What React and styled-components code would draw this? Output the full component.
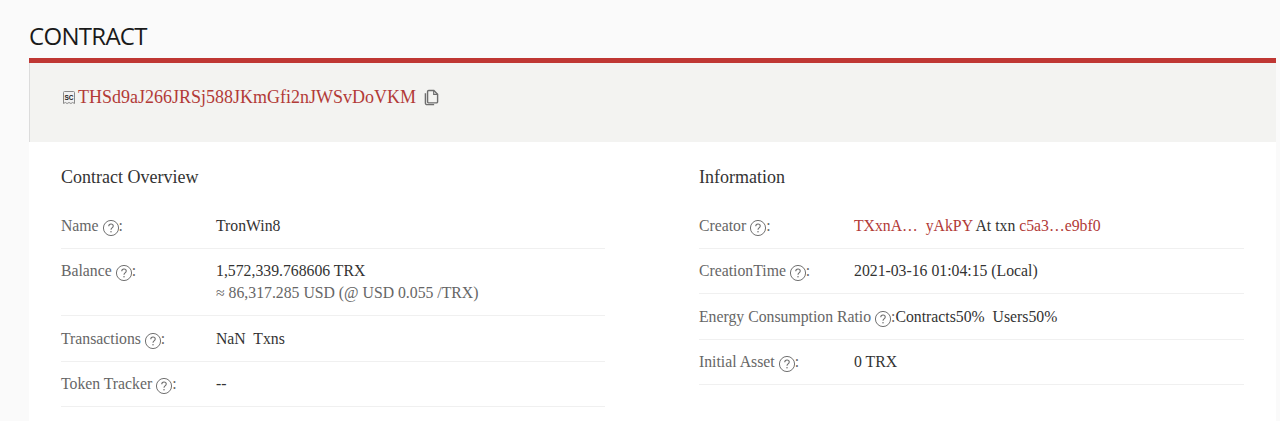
import styled, { createGlobalStyle } from "styled-components";

const GlobalStyle = createGlobalStyle`
  html, body {
    margin: 0;
    padding: 0;
    background: #fafafa;
    overflow: hidden;
  }
`

const HelpIcon = () => (
  <Help viewBox="0.5 0.5 15 15">
    <circle cx="8" cy="8" r="7.1" fill="none" stroke="#6b6b6b" strokeWidth="0.9"/>
    <path d="M5.9 6.3c0-1.2.9-2 2.1-2s2.1.8 2.1 1.9c0 .8-.4 1.2-1.1 1.7-.7.5-1 .9-1 1.7" fill="none" stroke="#6b6b6b" strokeWidth="1"/>
    <circle cx="8" cy="11.6" r=".7" fill="#6b6b6b"/>
  </Help>
)

const Label = ({children, wide}) => (
  <LabelText $wide={wide}>{children} <HelpIcon/>:</LabelText>
)

export default function App() {
  return (
    <Page>
      <GlobalStyle/>
      <Title>CONTRACT</Title>
      <Card>
        <CardHeader>
          <ScIcon viewBox="0 0 14 14">
            <path d="M1.5 1.5q0-1 1-1h9q1 0 1 1v11l-1.8-1-1.8 1-1.9-1-1.9 1-1.8-1-1.8 1z" fill="#f1f1f1" stroke="#8a8a8a" strokeWidth="1"/>
            <text x="7" y="8.8" fontSize="6.5" fontWeight="bold" fontFamily="Liberation Sans, sans-serif" textAnchor="middle" fill="#222">SC</text>
          </ScIcon>
          <Address>THSd9aJ266JRSj588JKmGfi2nJWSvDoVKM</Address>
          <CopyIcon viewBox="0 0 16 18">
            <path d="M5 1.5h5.5L14.5 5.5v8a1.2 1.2 0 0 1-1.2 1.2H5a1.2 1.2 0 0 1-1.2-1.2V2.7A1.2 1.2 0 0 1 5 1.5z" fill="none" stroke="#6e6e6e" strokeWidth="1.5"/>
            <path d="M10.3 1.7v3.9h4" fill="none" stroke="#6e6e6e" strokeWidth="1.2"/>
            <path d="M1.5 4.5v10.3a1.8 1.8 0 0 0 1.8 1.8h7.5" fill="none" stroke="#6e6e6e" strokeWidth="1.5"/>
          </CopyIcon>
        </CardHeader>
        <CardBody>
          <Column>
            <ColumnTitle>Contract Overview</ColumnTitle>
            <Row>
              <Label>Name</Label>
              <Value>TronWin8</Value>
            </Row>
            <Row>
              <Label>Balance</Label>
              <Value>
                1,572,339.768606 TRX
                <SubValue>≈ 86,317.285 USD (@ USD 0.055 /TRX)</SubValue>
              </Value>
            </Row>
            <Row>
              <Label>Transactions</Label>
              <Value>NaN&nbsp; Txns</Value>
            </Row>
            <Row>
              <Label>Token Tracker</Label>
              <Value>--</Value>
            </Row>
          </Column>
          <Column>
            <ColumnTitle>Information</ColumnTitle>
            <Row>
              <Label>Creator</Label>
              <Value><RedLink>TXxnA…&nbsp; yAkPY</RedLink> At txn <RedLink>c5a3…e9bf0</RedLink></Value>
            </Row>
            <Row>
              <Label>CreationTime</Label>
              <Value>2021-03-16 01:04:15 (Local)</Value>
            </Row>
            <Row>
              <Label wide>Energy Consumption Ratio</Label>
              <Value>Contracts50%&nbsp; Users50%</Value>
            </Row>
            <Row>
              <Label>Initial Asset</Label>
              <Value>0 TRX</Value>
            </Row>
          </Column>
        </CardBody>
      </Card>
    </Page>
  )
}

const Page = styled.div`
  padding: 20px 4px 0 29px;
  height: 421px;
  box-sizing: border-box;
  overflow: hidden;
  font-family: "Liberation Serif", serif;
`

const Title = styled.h1`
  margin: 0;
  height: 38px;
  line-height: 32px;
  font-family: "Open Sans", sans-serif;
  font-size: 24px;
  font-weight: 400;
  letter-spacing: -0.7px;
  color: #1a1a1a;
`

const Card = styled.div`
  border-top: 5px solid #bf3733;
`

const CardHeader = styled.div`
  height: 79px;
  box-sizing: border-box;
  padding: 21px 0 0 32px;
  display: flex;
  align-items: flex-start;
  background: #f3f3f1;
  border-left: 1px solid #dcdcdc;
`

const ScIcon = styled.svg`
  width: 14px;
  height: 14px;
  margin: 7px 2px 0 0;
  flex-shrink: 0;
`

const Address = styled.span`
  font-size: 18px;
  line-height: 26px;
  color: #b23a37;
`

const CopyIcon = styled.svg`
  width: 15px;
  height: 17px;
  margin: 5px 0 0 8px;
`

const CardBody = styled.div`
  display: grid;
  grid-template-columns: 544px 545px;
  column-gap: 94px;
  padding: 0 31px 0 32px;
  background: #fff;
  height: 279px;
`

const Column = styled.div`
  display: flex;
  flex-direction: column;
`

const ColumnTitle = styled.div`
  height: 61px;
  padding-top: 24px;
  box-sizing: border-box;
  font-size: 18px;
  line-height: 22px;
  color: #333;
`

const Row = styled.div`
  display: flex;
  align-items: flex-start;
  padding: 11.5px 0 11px;
  border-bottom: 1px solid #f0f0f0;
  font-size: 15.75px;
  line-height: 22px;
`

const LabelText = styled.div`
  flex: 0 0 ${(props) => (props.$wide ? "auto" : "155px")};
  color: #666;
  white-space: nowrap;
`

const Help = styled.svg`
  width: 16px;
  height: 16px;
  vertical-align: -5px;
`

const Value = styled.div`
  color: #333;
  white-space: nowrap;
`

const SubValue = styled.div`
  color: #666;
`

const RedLink = styled.span`
  color: #b23a37;
`
